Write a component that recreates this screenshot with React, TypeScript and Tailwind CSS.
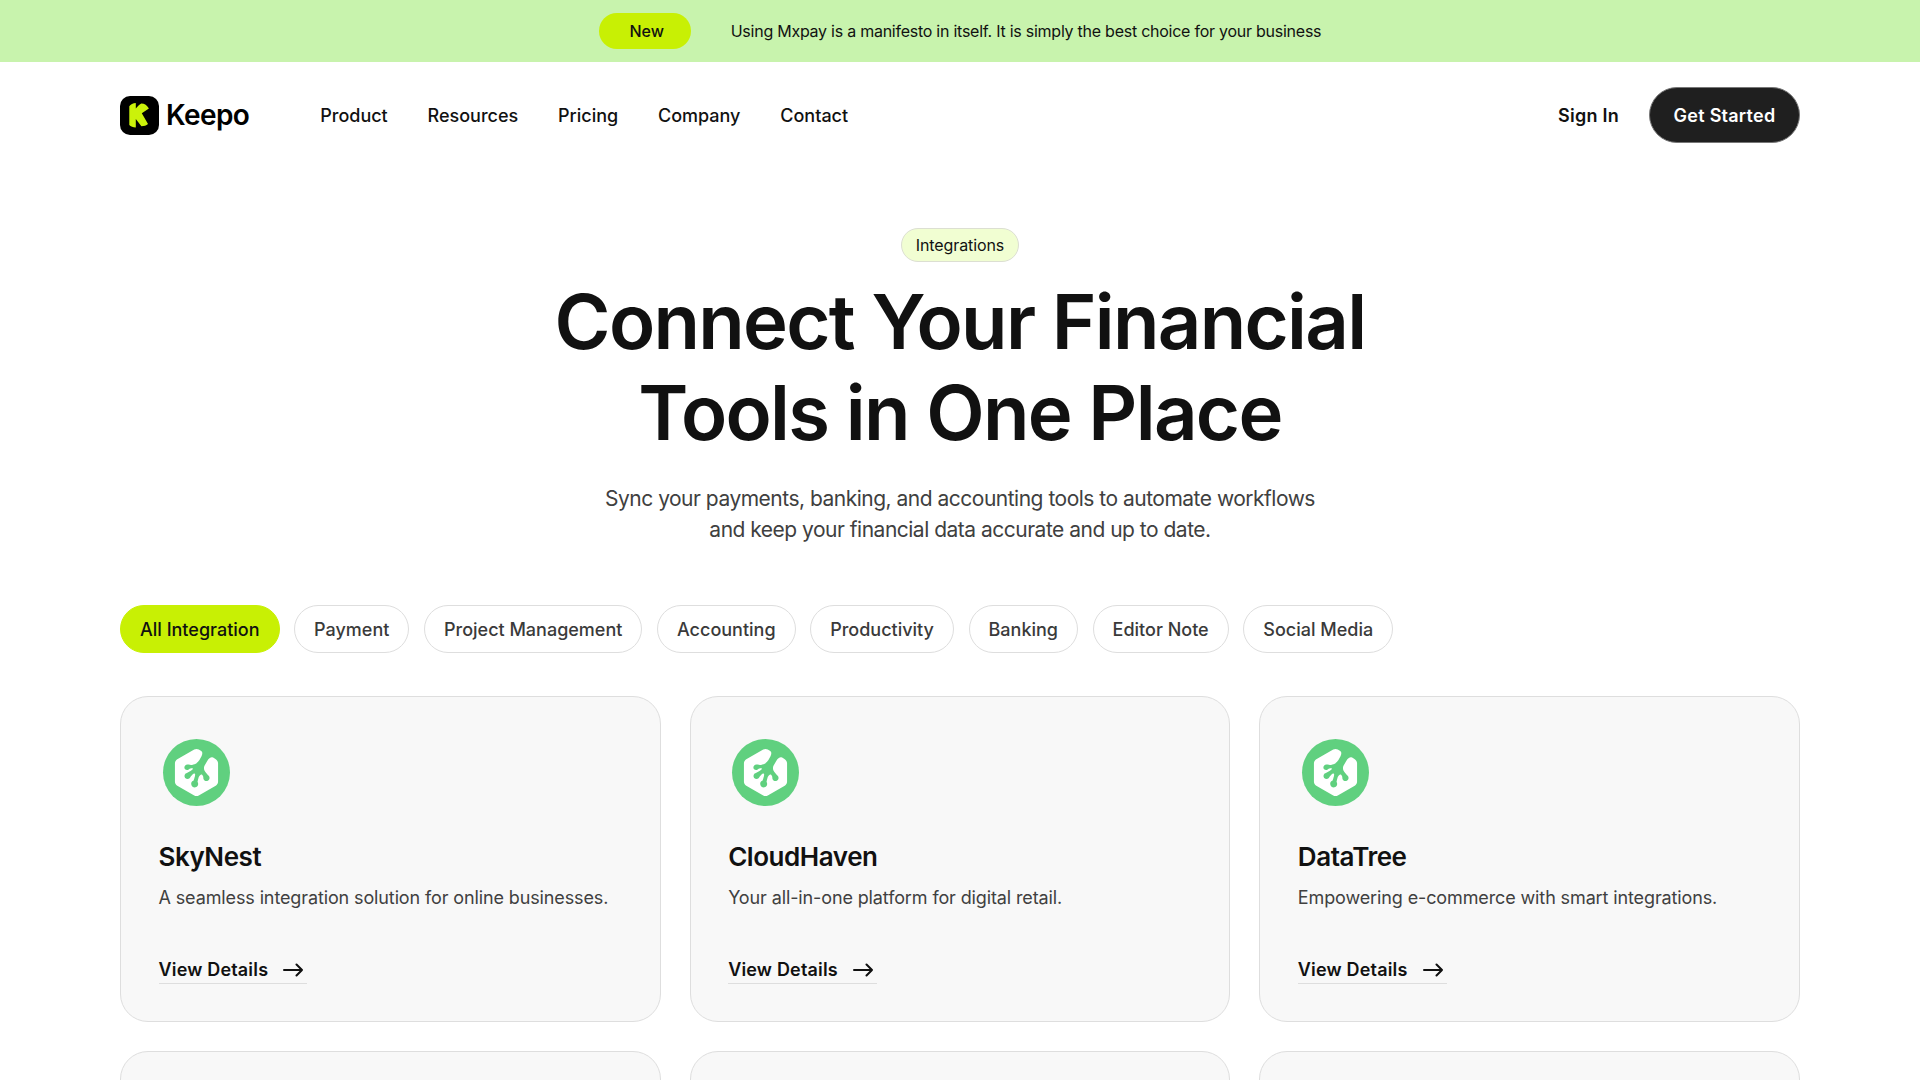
import React from "react";

import { SiTreehouse } from "react-icons/si";

const navLinks = ["Product", "Resources", "Pricing", "Company", "Contact"];

const categories = [
  "All Integration",
  "Payment",
  "Project Management",
  "Accounting",
  "Productivity",
  "Banking",
  "Editor Note",
  "Social Media",
];

const integrations = [
  {
    name: "SkyNest",
    description: "A seamless integration solution for online businesses.",
  },
  {
    name: "CloudHaven",
    description: "Your all-in-one platform for digital retail.",
  },
  {
    name: "DataTree",
    description: "Empowering e-commerce with smart integrations.",
  },
];

const Logo = () => (
  <div className="flex items-center gap-[7px]">
    <svg viewBox="0 0 39 39" className="size-[39px]">
      <rect width="39" height="39" rx="10" fill="#000" />
      <path
        d="M9.300 10.300C10.600 8.300 13 7.200 15.800 7v5.600C17.200 10.400 19.200 8.600 21.300 7.400c3.200 0 5.900 1.900 7.600 5L21.800 17.300 28 28c-1.700 1.500-3.900 2.200-6.600 2.200L15.800 23v8.500c-2.800-.1-5.100-1-6.500-2.500z"
        fill="#cbf20a"
      />
    </svg>
    <span className="text-[28px] leading-none font-semibold tracking-[-0.6px] text-black">
      Keepo
    </span>
  </div>
);

const Arrow = () => (
  <svg
    viewBox="0 0 20 14"
    className="h-[14px] w-5"
    fill="none"
    stroke="#111"
    strokeWidth="2"
    strokeLinecap="round"
    strokeLinejoin="round"
  >
    <path d="M1 7h18M13.500 1.500 19 7l-5.500 5.500" />
  </svg>
);

const IntegrationCard = ({
  name,
  description,
}: {
  name: string;
  description: string;
}) => {
  return (
    <div className="h-[326px] rounded-[28px] border border-[#dedede] bg-[#f8f8f8] px-[37.500px] pt-[42px]">
      <div className="ml-1 flex size-[67px] items-center justify-center rounded-full bg-[#60d07f]">
        <SiTreehouse className="size-[47px] text-white" />
      </div>
      <h3 className="mt-[33px] text-[26px] leading-9 font-semibold tracking-[-0.45px] text-[#111]">
        {name}
      </h3>
      <p className="mt-[9px] text-[18px] leading-7 tracking-[-0.12px] text-[#404040]">
        {description}
      </p>
      <a className="mt-11 inline-flex h-7 items-center gap-[15px] border-b border-[#dedede] pr-1 text-[18px] font-semibold tracking-[0.18px] whitespace-nowrap text-[#111]">
        View Details
        <Arrow />
      </a>
    </div>
  );
};

const App = () => {
  return (
    <div className="h-screen overflow-hidden bg-white font-['Inter',sans-serif] text-[#111]">
      <div className="flex h-[62px] items-center justify-center gap-10 bg-[#c8f3ad]">
        <span className="flex h-9 w-[92px] items-center justify-center rounded-full bg-[#c8f004] pl-1 text-[16px] font-medium">
          New
        </span>
        <p className="text-[16px] tracking-[-0.25px]">
          Using Mxpay is a manifesto in itself. It is simply the best choice for
          your business
        </p>
      </div>

      <div className="mx-auto w-[1680px]">
        <header className="flex h-[106px] items-center justify-between">
          <div className="flex items-center gap-[71px]">
            <Logo />
            <nav className="flex gap-[39.800px] pt-px text-[18px] font-medium">
              {navLinks.map((link) => (
                <a key={link}>{link}</a>
              ))}
            </nav>
          </div>
          <div className="flex items-center gap-[30px] text-[18px] font-semibold tracking-[0.25px]">
            <a>Sign In</a>
            <button className="h-14 w-[151px] rounded-full border border-[#777] bg-[#1f1f1f] text-white">
              Get Started
            </button>
          </div>
        </header>

        <section className="flex flex-col items-center pt-[60px] text-center">
          <span className="flex h-[34px] w-[118px] items-center justify-center rounded-full border border-[#dcdfd2] bg-[#f1fed2] text-[16px] tracking-[-0.1px]">
            Integrations
          </span>
          <h1 className="mt-[14px] text-[76px] leading-[91px] font-semibold tracking-[-1.7px]">
            Connect Your Financial
            <br />
            Tools in One Place
          </h1>
          <p className="mt-[25px] text-[21px] leading-[31px] tracking-[-0.5px] text-[#404040]">
            Sync your payments, banking, and accounting tools to automate
            workflows
            <br />
            and keep your financial data accurate and up to date.
          </p>
        </section>

        <div className="mt-[60px] flex gap-[14.600px]">
          {categories.map((category, i) => (
            <button
              key={category}
              className={
                i === 0
                  ? "h-12 rounded-full border border-[#c8f004] bg-[#c8f004] px-[19px] text-[18px] font-medium whitespace-nowrap text-[#111]"
                  : "h-12 rounded-full border border-[#dedede] px-[19px] text-[18px] font-medium whitespace-nowrap text-[#3a3a3a]"
              }
            >
              {category}
            </button>
          ))}
        </div>

        <div className="mt-[43px] grid grid-cols-3 gap-[29px]">
          {integrations.map((item) => (
            <IntegrationCard key={item.name} {...item} />
          ))}
          {integrations.map((item) => (
            <div
              key={item.name}
              className="h-[326px] rounded-[28px] border border-[#dedede] bg-[#f8f8f8]"
            />
          ))}
        </div>
      </div>
    </div>
  );
};

export default App;
